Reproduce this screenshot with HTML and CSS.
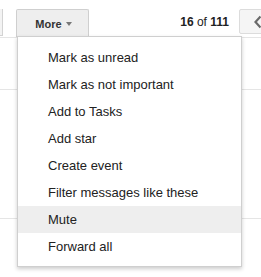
FILE: index.html
```html
<!DOCTYPE html>
<html>
<head>
<meta charset="utf-8">
<link rel="stylesheet" href="styles.css">
</head>
<body>
<div class="page">
  <div class="toolbar">
    <div class="stub"></div>
    <div class="more-btn">More<span class="caret"></span></div>
    <div class="spacer"></div>
    <div class="count"><b>16</b> of <b>111</b></div>
    <div class="nav-btn">
      <svg width="10" height="14" viewBox="0 0 10 14"><polyline points="7.5,1.5 2.5,7 7.5,12.5" fill="none" stroke="#6a6a6a" stroke-width="2.2"/></svg>
    </div>
  </div>
  <div class="row row-a"></div>
  <div class="row row-b"></div>
  <div class="menu">
    <div class="item">Mark as unread</div>
    <div class="item">Mark as not important</div>
    <div class="item">Add to Tasks</div>
    <div class="item">Add star</div>
    <div class="item">Create event</div>
    <div class="item">Filter messages like these</div>
    <div class="item hover">Mute</div>
    <div class="item">Forward all</div>
  </div>
</div>
</body>
</html>
```
FILE: styles.css
```css
html, body {
  margin: 0;
  padding: 0;
  background: #fff;
}
body {
  width: 261px;
  height: 277px;
  overflow: hidden;
  font-family: "Liberation Sans", Arial, sans-serif;
}
.page {
  position: relative;
  width: 261px;
  height: 277px;
  overflow: hidden;
}
.toolbar {
  display: flex;
  align-items: flex-start;
  height: 38px;
  box-sizing: border-box;
  padding-top: 9px;
  border-bottom: 1px solid #e5e5e5;
}
.stub {
  width: 3px;
  height: 27px;
  box-sizing: border-box;
  background: #f3f3f3;
  border-right: 1px solid #d3d3d3;
  border-bottom: 1px solid #d3d3d3;
  flex: none;
}
.more-btn {
  margin-left: 13px;
  width: 73px;
  height: 28px;
  box-sizing: border-box;
  display: flex;
  align-items: center;
  justify-content: center;
  padding-left: 2px;
  background: #eeeeee;
  border: 1px solid #cfcfcf;
  border-bottom: none;
  border-radius: 2px 2px 0 0;
  font-size: 11px;
  font-weight: bold;
  color: #333;
  flex: none;
}
.caret {
  display: inline-block;
  margin-left: 4px;
  margin-top: 1px;
  border-top: 4px solid #777;
  border-left: 3.5px solid transparent;
  border-right: 3.5px solid transparent;
}
.spacer {
  flex: 1;
}
.count {
  font-size: 12px;
  color: #222;
  line-height: 27px;
  margin-right: 10px;
}
.count b {
  font-weight: bold;
}
.nav-btn {
  width: 30px;
  height: 25px;
  box-sizing: border-box;
  margin-right: -8px;
  background: #f5f5f5;
  border: 1px solid #dcdcdc;
  border-radius: 2px;
  display: flex;
  align-items: center;
  padding-left: 13px;
  flex: none;
}
.nav-btn svg {
  display: block;
}
.row {
  border-bottom: 1px solid #e5e5e5;
}
.row-a {
  height: 51px;
}
.row-b {
  height: 128px;
}
.menu {
  position: absolute;
  left: 17px;
  top: 36px;
  width: 225px;
  box-sizing: border-box;
  background: #fff;
  border: 1px solid #cfcfcf;
  box-shadow: 0 2px 4px rgba(0, 0, 0, 0.2);
  padding: 7px 0 6px;
}
.item {
  height: 27px;
  line-height: 27px;
  padding-left: 30px;
  font-size: 13px;
  color: #222;
  white-space: nowrap;
}
.item.hover {
  background: #eeeeee;
}
```
